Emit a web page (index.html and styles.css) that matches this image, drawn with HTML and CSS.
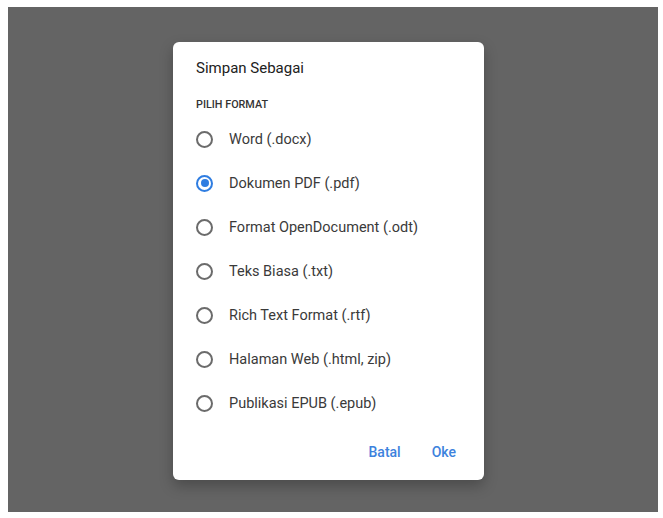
FILE: index.html
```html
<!DOCTYPE html>
<html lang="id">
<head>
    <meta charset="UTF-8">
    <meta name="viewport" content="width=device-width, initial-scale=1.0">
    <title>Simpan Sebagai</title>
    <link rel="stylesheet" href="styles.css">
</head>
<body>
    <div class="screen">
        <div class="dialog">
            <div class="title">Simpan Sebagai</div>
            <div class="label">PILIH FORMAT</div>
            <div class="options">
                <div class="option"><span class="radio"></span>Word (.docx)</div>
                <div class="option"><span class="radio checked"></span>Dokumen PDF (.pdf)</div>
                <div class="option"><span class="radio"></span>Format OpenDocument (.odt)</div>
                <div class="option"><span class="radio"></span>Teks Biasa (.txt)</div>
                <div class="option"><span class="radio"></span>Rich Text Format (.rtf)</div>
                <div class="option"><span class="radio"></span>Halaman Web (.html, zip)</div>
                <div class="option"><span class="radio"></span>Publikasi EPUB (.epub)</div>
            </div>
            <div class="actions">
                <div class="btn">Batal</div>
                <div class="btn">Oke</div>
            </div>
        </div>
    </div>
</body>
</html>
```

FILE: styles.css
```css
body {
    margin: 0;
    padding: 7px 5px 6px 8px;
    background-color: #fff;
    font-family: Roboto, "Noto Sans", sans-serif;
}
.screen {
    height: 505px;
    background-color: #646464;
    padding: 35px 0 0 165px;
    box-sizing: border-box;
}
.dialog {
    width: 311px;
    height: 438px;
    box-sizing: border-box;
    background-color: #fff;
    border-radius: 6px;
    padding: 16px 20px 10px 23px;
    box-shadow: 0 6px 14px rgba(0, 0, 0, 0.25);
    display: flex;
    flex-direction: column;
}
.title {
    font-size: 15px;
    line-height: 20px;
    color: #212121;
}
.label {
    margin-top: 20px;
    font-size: 10.8px;
    font-weight: 500;
    line-height: 14px;
    color: #333;
}
.options {
    margin-top: 5px;
}
.option {
    height: 44px;
    display: flex;
    align-items: center;
    font-size: 14.5px;
    color: #3a3a3a;
}
.radio {
    width: 13px;
    height: 13px;
    border: 2px solid #6b6b6b;
    border-radius: 50%;
    margin-right: 16px;
    flex-shrink: 0;
    position: relative;
}
.radio.checked {
    border-color: #2f7de1;
}
.radio.checked::after {
    content: "";
    position: absolute;
    left: 2.5px;
    top: 2.5px;
    width: 8px;
    height: 8px;
    border-radius: 50%;
    background-color: #2f7de1;
}
.actions {
    margin-top: 9px;
    display: flex;
    justify-content: flex-end;
    gap: 15px;
}
.btn {
    padding: 0 8px;
    line-height: 36px;
    font-size: 14px;
    font-weight: 500;
    color: #3d82dd;
}
```
